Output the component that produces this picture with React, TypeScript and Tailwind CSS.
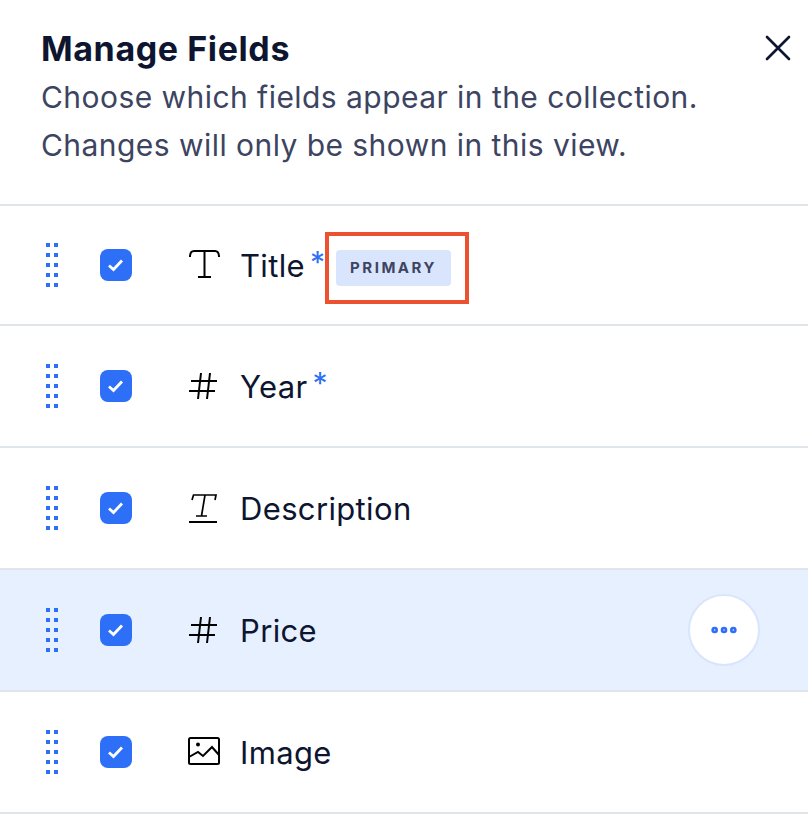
import { MoreHorizontal } from 'lucide-react'
import type { ReactNode } from 'react'

function DragHandle() {
  const ys = [0, 10, 20, 30, 40]
  return (
    <svg width="12" height="44" viewBox="0 0 12 44" fill="#2e6ff7" className="shrink-0">
      {ys.map((y) => (
        <g key={y}>
          <rect x="0" y={y} width="4" height="4" />
          <rect x="8" y={y} width="4" height="4" />
        </g>
      ))}
    </svg>
  )
}

function Checkbox() {
  return (
    <div className="flex h-8 w-8 shrink-0 items-center justify-center rounded-lg bg-[#2e6ff7]">
      <svg width="18" height="16" viewBox="0 0 18 16" fill="none" stroke="white" strokeWidth="2.8">
        <path d="M2 8.5 L6.5 12.5 L15 3.5" />
      </svg>
    </div>
  )
}

function TitleIcon() {
  return (
    <svg width="32" height="32" viewBox="0 0 32 32" fill="none" stroke="#000" strokeWidth="2">
      <path d="M2 8 Q2 2 6 2 H27 Q31 2 31 8 M16.5 2 V28 M10 28 H23" />
    </svg>
  )
}

function HashIcon() {
  return (
    <svg width="32" height="32" viewBox="0 0 32 32" fill="none" stroke="#000" strokeWidth="2">
      <path d="M3 11 H29 M1 21 H27 M13 3 L10 29 M22 3 L19 29" />
    </svg>
  )
}

function TextIcon() {
  return (
    <svg width="32" height="32" viewBox="0 0 32 32" fill="none" stroke="#000" strokeWidth="2">
      <path d="M4 8 L5.5 3 H28 L27 8 M17 3 L13.5 24 M8 24 H19" strokeWidth="1.7" />
      <path d="M1 30 H29" />
    </svg>
  )
}

function ImageIcon() {
  return (
    <svg width="32" height="32" viewBox="0 0 32 32" fill="none" stroke="#000" strokeWidth="2">
      <rect x="1" y="2" width="30" height="26" rx="1.5" />
      <circle cx="10" cy="8.5" r="2" fill="#000" stroke="none" />
      <path d="M1 21 L10 16 L15 20 L24 11 L31 19" />
    </svg>
  )
}

function Asterisk() {
  return <span className="ml-[5px] -mt-[6px] text-[30px] leading-none text-[#2e6ff7]">*</span>
}

interface FieldRowProps {
  icon: ReactNode
  label: string
  selected?: boolean
  first?: boolean
  children?: ReactNode
}

function FieldRow({ icon, label, selected, first, children }: FieldRowProps) {
  return (
    <div className={`flex ${first ? 'h-[120px]' : 'h-[122px]'} items-center border-b-2 border-[#dfe5eb] pl-[46px] pr-[48px] ${selected ? 'bg-[#e7f0ff]' : 'bg-white'}`}>
      <DragHandle />
      <div className="ml-[42px]">
        <Checkbox />
      </div>
      <div className="ml-[56px] flex w-8 shrink-0 items-center justify-center">{icon}</div>
      <span className="ml-[20px] text-[31px] leading-none tracking-[0.35px] text-[#0d1530]">{label}</span>
      {children}
    </div>
  )
}

export default function App() {
  return (
    <div className="h-[816px] w-[808px] overflow-hidden bg-white font-['Inter',sans-serif]">
      <div className="flex h-[206px] items-start justify-between border-b-2 border-[#dfe5eb] pl-[41px] pr-[17px] pt-[27px]">
        <div>
          <h1 className="text-[34px] font-bold leading-[44px] tracking-[0.6px] text-[#0d1530]">Manage Fields</h1>
          <p className="mt-[2px] text-[30px] leading-[48px] tracking-[0.45px] text-[#3d4461]">
            Choose which fields appear in the collection.
            <br />
            Changes will only be shown in this view.
          </p>
        </div>
        <svg width="26" height="26" viewBox="0 0 26 26" fill="none" stroke="#0d1530" strokeWidth="2.6" strokeLinecap="round" className="mt-[8px] shrink-0">
          <path d="M2 2 L24 24 M24 2 L2 24" />
        </svg>
      </div>

      <FieldRow first icon={<TitleIcon />} label="Title">
        <Asterisk />
        <div className="mt-[6px] flex h-[72px] items-center border-4 border-[#ec5230] pl-[7px] pr-[14px]">
          <span className="flex h-9 w-[115px] items-center justify-center rounded bg-[#d9e5fc] text-[15px] font-bold tracking-[2.5px] text-[#3d4461]">
            PRIMARY
          </span>
        </div>
      </FieldRow>
      <FieldRow icon={<HashIcon />} label="Year">
        <Asterisk />
      </FieldRow>
      <FieldRow icon={<TextIcon />} label="Description" />
      <FieldRow icon={<HashIcon />} label="Price" selected>
        <button className="ml-auto flex h-[72px] w-[72px] items-center justify-center rounded-full border-2 border-[#d9e5fc] bg-white text-[#2e6ff7]">
          <MoreHorizontal size={32} strokeWidth={3} />
        </button>
      </FieldRow>
      <FieldRow icon={<ImageIcon />} label="Image" />
    </div>
  )
}
